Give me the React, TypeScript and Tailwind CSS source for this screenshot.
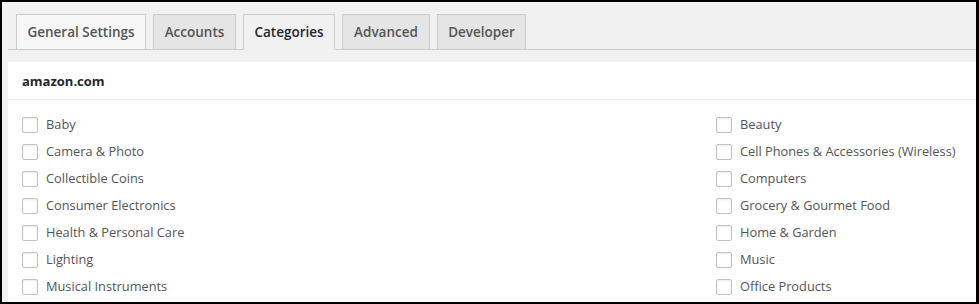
import { useState } from 'react'

const tabs = [
  { label: 'General Settings', w: 'w-[130px]', bg: 'bg-[#f7f7f7]' },
  { label: 'Accounts', w: 'w-[83px]', bg: 'bg-[#e5e5e5]' },
  { label: 'Categories', w: 'w-[92px]', bg: 'bg-[#f1f1f1]' },
  { label: 'Advanced', w: 'w-[88px]', bg: 'bg-[#e5e5e5]' },
  { label: 'Developer', w: 'w-[89px]', bg: 'bg-[#e5e5e5]' },
]

const left = [
  'Baby',
  'Camera & Photo',
  'Collectible Coins',
  'Consumer Electronics',
  'Health & Personal Care',
  'Lighting',
  'Musical Instruments',
]

const right = [
  'Beauty',
  'Cell Phones & Accessories (Wireless)',
  'Computers',
  'Grocery & Gourmet Food',
  'Home & Garden',
  'Music',
  'Office Products',
]

function Check({ label }: { label: string }) {
  const [on, setOn] = useState(false)
  return (
    <label className="flex items-center h-[27px] cursor-pointer">
      <span
        onClick={() => setOn(!on)}
        className="w-[16px] h-[16px] border border-[#bfc2c5] rounded-[2px] bg-white shadow-[inset_0_1px_2px_rgba(0,0,0,0.08)] flex items-center justify-center text-[11px] text-[#1e8cbe]"
      >
        {on ? '✓' : ''}
      </span>
      <span className="ml-[8px] text-[12.8px] text-[#555]">{label}</span>
    </label>
  )
}

export default function App() {
  const [active, setActive] = useState('Categories')

  return (
    <main
      className="w-[979px] h-[304px] bg-black pt-[2px] pl-[2px] pr-[3px] pb-[2px] overflow-hidden"
      style={{ fontFamily: '"Open Sans", "Noto Sans", sans-serif' }}
    >
      <div className="h-full bg-[#f1f1f1] overflow-hidden">
        <nav className="ml-[6px] pt-[12px] flex border-b border-[#ccc] h-[48px]">
          {tabs.map((t, i) => {
            const isActive = t.label === active
            return (
              <button
                key={t.label}
                onClick={() => setActive(t.label)}
                className={`${t.w} ${isActive ? 'bg-[#f1f1f1] border-b-[#f1f1f1] text-[#23282d]' : t.bg + ' text-[#555]'} ${i === 0 ? 'ml-[8px]' : 'ml-[7px]'} h-[36px] -mb-px border border-[#ccc] text-[13.5px] font-semibold flex items-center justify-center`}
              >
                {t.label}
              </button>
            )
          })}
        </nav>

        <section className="mt-[12px] ml-[6px] bg-white h-full">
          <h2 className="h-[38px] flex items-center pl-[14px] pt-[2px] border-b border-[#eee] text-[13px] font-bold text-[#23282d]">
            amazon.com
          </h2>
          <div className="grid grid-cols-[694px_1fr] pl-[14px] pt-[11px]">
            <div>
              {left.map((l) => (
                <Check key={l} label={l} />
              ))}
            </div>
            <div>
              {right.map((l) => (
                <Check key={l} label={l} />
              ))}
            </div>
          </div>
        </section>
      </div>
    </main>
  )
}
